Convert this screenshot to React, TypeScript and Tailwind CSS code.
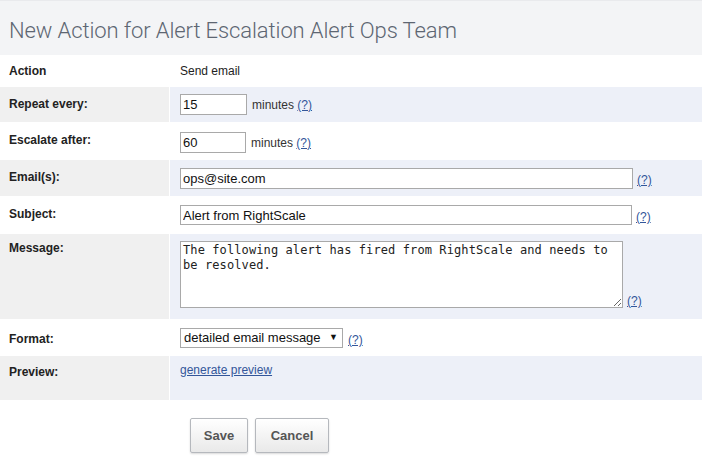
import React from "react";

const Help = ({ className = "" }: { className?: string }) => (
  <a href="#" className={`text-[12px] text-[#33569a] underline ${className}`}>(?)</a>
);

const Row = ({
  label,
  alt,
  h,
  labelPad = "pt-[8px]",
  children,
  valueClass = "",
}: {
  label: string;
  alt?: boolean;
  h: string;
  labelPad?: string;
  children: React.ReactNode;
  valueClass?: string;
}) => (
  <div className={`flex ${h} border-b border-white`}>
    <div
      className={`w-[169px] shrink-0 pl-[9px] ${labelPad} text-[12px] font-bold text-[#222] ${alt ? "bg-[#f0f0f0]" : "bg-white"}`}
    >
      {label}
    </div>
    <div className={`w-[1px] bg-white`} />
    <div className={`flex-1 pl-[10px] ${alt ? "bg-[#edf0f8]" : "bg-white"} ${valueClass}`}>{children}</div>
  </div>
);

export default function App() {
  return (
    <div className="w-[702px] h-[476px] bg-white font-['Liberation_Sans',Arial,sans-serif] text-[#222] overflow-hidden">
      <div className="h-[55px] bg-[#f3f4f6] border-t border-[#e9eaed] flex items-center pl-[9px] pt-[6px]">
        <h1 className="font-['Roboto',sans-serif] font-light text-[22px] leading-[26px] text-[#5d6672] tracking-[-0.1px]">
          New Action for Alert Escalation Alert Ops Team
        </h1>
      </div>

      <Row label="Action" h="h-[32px]" labelPad="pt-[7px]" valueClass="pt-[7px] text-[12px]">
        Send email
      </Row>

      <Row label="Repeat every:" alt h="h-[36px]" labelPad="pt-[8px]" valueClass="pt-[7px] flex items-start gap-[5px]">
        <input
          defaultValue="15"
          className="w-[67px] h-[21px] border border-[#a9a9a9] bg-white px-[2px] text-[13px] text-[#111] outline-none"
        />
        <span className="text-[12px] text-[#333] mt-[2px]">
          minutes <Help />
        </span>
      </Row>

      <Row label="Escalate after:" h="h-[37px]" labelPad="pt-[8px]" valueClass="pt-[9px] flex items-start gap-[5px]">
        <input
          defaultValue="60"
          className="w-[66px] h-[21px] border border-[#a9a9a9] bg-white px-[2px] text-[13px] text-[#111] outline-none"
        />
        <span className="text-[12px] text-[#333] mt-[2px]">
          minutes <Help />
        </span>
      </Row>

      <Row label="Email(s):" alt h="h-[37px]" labelPad="pt-[8px]" valueClass="pt-[8px] flex items-start gap-[4px]">
        <input
          defaultValue="ops@site.com"
          className="w-[453px] h-[21px] border border-[#a9a9a9] bg-white px-[2px] text-[13px] text-[#111] outline-none"
        />
        <Help className="mt-[3px]" />
      </Row>

      <Row label="Subject:" h="h-[37px]" labelPad="pt-[8px]" valueClass="pt-[8px] flex items-start gap-[4px]">
        <input
          defaultValue="Alert from RightScale"
          className="w-[452px] h-[20px] border border-[#a9a9a9] bg-white px-[2px] text-[13px] text-[#111] outline-none"
        />
        <Help className="mt-[3px]" />
      </Row>

      <Row label="Message:" alt h="h-[86px]" labelPad="pt-[5px]" valueClass="pt-[7px] flex items-end gap-[4px] pb-[11px]">
        <textarea
          defaultValue="The following alert has fired from RightScale and needs to be resolved."
          className="w-[443px] h-[67px] border border-[#a9a9a9] bg-white px-[2px] py-[1px] text-[12px] leading-[15px] tracking-[0.1px] text-[#222] font-['DejaVu_Sans_Mono',monospace] outline-none resize-y"
        />
        <Help className="mb-[-2px]" />
      </Row>

      <Row label="Format:" h="h-[36px]" labelPad="pt-[10px]" valueClass="pt-[8px] flex items-start gap-[5px]">
        <div className="w-[163px] h-[20px] border border-[#a9a9a9] bg-white pl-[3px] pr-[4px] flex items-center justify-between text-[13px] text-[#111]">
          <span>detailed email message</span>
          <span className="text-[9px]">▼</span>
        </div>
        <Help className="mt-[3px]" />
      </Row>

      <Row label="Preview:" alt h="h-[45px]" labelPad="pt-[7px]" valueClass="pt-[7px] text-[12px] leading-[14px]">
        <a href="#" className="text-[12px] text-[#33569a] underline">generate preview</a>
      </Row>

      <div className="flex gap-[7px] pl-[190px] pt-[17px]">
        <button className="w-[58px] h-[35px] border border-[#b5b8bd] rounded-[2px] bg-gradient-to-b from-white to-[#e9e9e9] shadow-[0_1px_2px_rgba(0,0,0,0.15)] text-[13px] font-bold text-[#555]">
          Save
        </button>
        <button className="w-[74px] h-[35px] border border-[#b5b8bd] rounded-[2px] bg-gradient-to-b from-white to-[#e9e9e9] shadow-[0_1px_2px_rgba(0,0,0,0.15)] text-[13px] font-bold text-[#555]">
          Cancel
        </button>
      </div>
    </div>
  );
}
